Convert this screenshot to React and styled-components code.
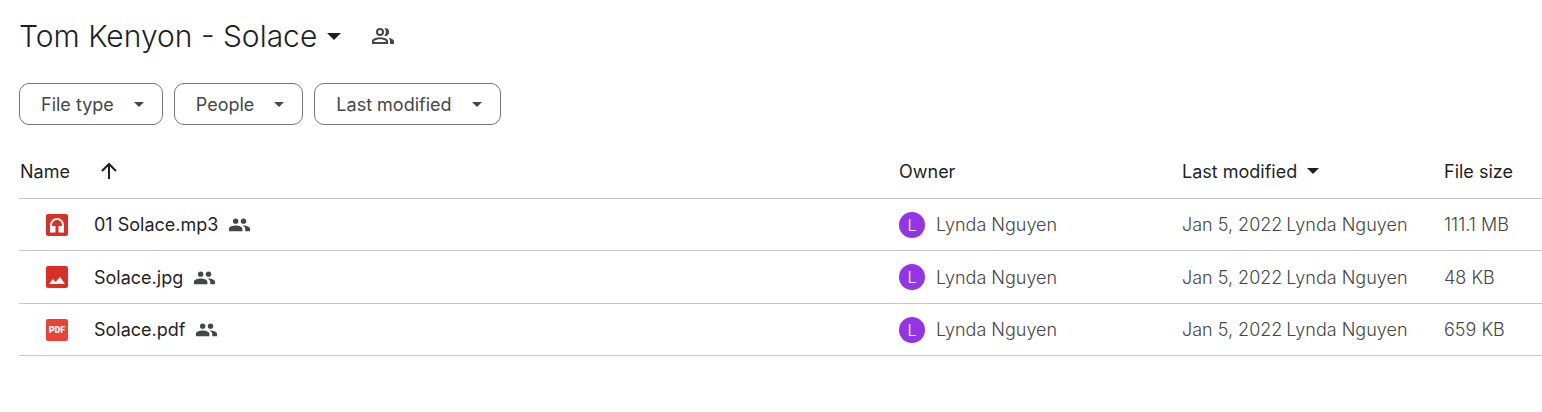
import React from 'react';
import styled, { createGlobalStyle } from 'styled-components';

const files = [
    { name: '01 Solace.mp3', type: 'audio', owner: 'Lynda Nguyen', modified: 'Jan 5, 2022', size: '111.1 MB' },
    { name: 'Solace.jpg', type: 'image', owner: 'Lynda Nguyen', modified: 'Jan 5, 2022', size: '48 KB' },
    { name: 'Solace.pdf', type: 'pdf', owner: 'Lynda Nguyen', modified: 'Jan 5, 2022', size: '659 KB' },
];

const filters = ['File type', 'People', 'Last modified'];

const Caret = ({ size }) => (
    <svg width={size * 2} height={size} viewBox="0 0 14 7" aria-hidden="true">
        <path d="M0 0h14L7 7z" fill="currentColor" />
    </svg>
);

const SharedOutline = () => (
    <svg width="24" height="24" viewBox="0 0 24 24" fill="currentColor" role="img" aria-label="Shared">
        <path fillRule="evenodd" d="M9 12a4 4 0 1 0 0-8 4 4 0 0 0 0 8zm0-2a2 2 0 1 0 0-4 2 2 0 0 0 0 4z" />
        <path fillRule="evenodd" d="M1 20v-2.800c0-.9.400-1.700 1.300-2.200C4 14 6.300 13.200 9 13.200s5 .8 6.700 1.800c.9.500 1.300 1.300 1.300 2.200V20zm2-2h12v-.8c0-.3-.1-.4-.3-.5-1.500-.9-3.400-1.500-5.700-1.500s-4.200.6-5.700 1.500c-.2.100-.3.200-.3.500z" />
        <path d="M13.300 11.900c1-1.100 1.500-2.400 1.500-3.900s-.5-2.800-1.500-3.900A4 4 0 1 1 13.300 11.900zM19 20v-3c0-1.300-.6-2.400-1.700-3.300 1.600.3 3 .8 4.200 1.500.9.500 1.500 1.200 1.500 2.100V20z" />
    </svg>
);

const Shared = () => (
    <svg width="23" height="23" viewBox="0 0 24 24" fill="currentColor" role="img" aria-label="Shared">
        <circle cx="8" cy="8.500" r="2.800" />
        <circle cx="16.200" cy="8.500" r="2.800" />
        <path d="M8 13c-2.700 0-7 1-7 3.500V19h14v-2.500c0-2.500-4.300-3.500-7-3.500zM15 13c1.800 1 3 2 3 3.600V19h5v-2.500c0-2.400-4-3.700-8-3.500z" />
    </svg>
);

const FileIcon = ({ type }) => (
    <FileSvg viewBox="0 0 22 22" $type={type} role="img" aria-label={type}>
        <rect width="22" height="22" rx="2" fill="currentColor" />
        {type === 'audio' && (
            <path d="M4 18.500V11a7 7 0 0 1 14 0v7.500h-5.500V12H16v-1a5 5 0 0 0-10 0v1h3.500v6.500z" fill="#fff" />
        )}
        {type === 'image' && <path d="M3 18l4-5 2.500 3L14 11l5 7z" fill="#fff" />}
        {type === 'pdf' && <text x="11" y="14" textAnchor="middle" fill="#fff">PDF</text>}
    </FileSvg>
);

const App = () => {
    return (
        <Page>
            <GlobalStyle />
            <Header>
                <TitleButton type="button">
                    <h1>Tom Kenyon - Solace</h1>
                    <Caret size={7} />
                </TitleButton>
                <IconButton type="button" aria-label="Manage access">
                    <SharedOutline />
                </IconButton>
            </Header>

            <Filters>
                {filters.map((label) => (
                    <FilterButton type="button" key={label}>
                        {label}
                        <Caret size={5} />
                    </FilterButton>
                ))}
            </Filters>

            <Table>
                <thead>
                    <tr>
                        <HeadCell>
                            <SortButton type="button" $gap={30}>
                                Name
                                <svg width="18" height="18" viewBox="0 0 18 18" fill="none" stroke="currentColor" strokeWidth="2" aria-hidden="true">
                                    <path d="M9 17V2M2 9l7-7 7 7" />
                                </svg>
                            </SortButton>
                        </HeadCell>
                        <HeadCell $width={283}>Owner</HeadCell>
                        <HeadCell $width={262}>
                            <SortButton type="button" $gap={10}>
                                Last modified
                                <Caret size={6} />
                            </SortButton>
                        </HeadCell>
                        <HeadCell $width={98}>File size</HeadCell>
                    </tr>
                </thead>
                <tbody>
                    {files.map((file) => (
                        <tr key={file.name}>
                            <Cell>
                                <FileName>
                                    <FileIcon type={file.type} />
                                    <span>{file.name}</span>
                                    <Shared />
                                </FileName>
                            </Cell>
                            <Cell>
                                <Owner>
                                    <Avatar>{file.owner[0]}</Avatar>
                                    {file.owner}
                                </Owner>
                            </Cell>
                            <Cell>
                                <Modified>
                                    <span>{file.modified}</span>
                                    <span>{file.owner}</span>
                                </Modified>
                            </Cell>
                            <Cell>{file.size}</Cell>
                        </tr>
                    ))}
                </tbody>
            </Table>
        </Page>
    );
};

const GlobalStyle = createGlobalStyle`
    * {
        box-sizing: border-box;
    }

    body {
        margin: 0;
        background: #fff;
        color: #1f1f1f;
        font-family: Inter, "Liberation Sans", sans-serif;
        font-size: 18px;
    }

    button {
        padding: 0;
        border: 0;
        background: none;
        color: inherit;
        font: inherit;
        cursor: pointer;
    }

    svg {
        flex: none;
    }
`;

const Page = styled.main`
    padding: 16px 0 0 19px;
`;

const Header = styled.header`
    display: flex;
    align-items: center;
    gap: 30px;
    height: 40px;
`;

const TitleButton = styled.button`
    display: flex;
    align-items: center;
    gap: 10px;

    h1 {
        margin: 0;
        font-size: 30px;
        font-weight: 300;
        line-height: 40px;
    }
`;

const IconButton = styled.button`
    display: flex;
    color: #444746;
`;

const Filters = styled.div`
    display: flex;
    gap: 11px;
    margin-top: 27px;
`;

const FilterButton = styled.button`
    && {
        display: flex;
        align-items: center;
        gap: 20px;
        height: 42px;
        padding: 0 18px 0 21px;
        border: 1px solid #747775;
        border-radius: 10px;
        color: #444746;
    }
`;

const Table = styled.table`
    width: 100%;
    margin-top: 21px;
    border-spacing: 0;
    table-layout: fixed;
`;

const HeadCell = styled.th`
    width: ${(props) => (props.$width ? `${props.$width}px` : 'auto')};
    height: 53px;
    padding: 0 0 2px;
    border-bottom: 1px solid #c7c7c7;
    font-weight: 400;
    text-align: left;

    &:first-child {
        padding-left: 1px;
    }
`;

const SortButton = styled.button`
    display: flex;
    align-items: center;
    gap: ${(props) => props.$gap}px;
`;

const Cell = styled.td`
    height: 52px;
    padding: 0;
    border-bottom: 1px solid #c7c7c7;
    color: #444746;
    font-weight: 300;
    white-space: nowrap;

    tr:nth-child(even) > & {
        height: 53px;
    }
`;

const FileName = styled.div`
    display: flex;
    align-items: center;
    gap: 10px;
    padding-left: 27px;

    span {
        color: #1f1f1f;
        font-weight: 400;
    }
`;

const FileSvg = styled.svg`
    width: 22px;
    height: 22px;
    margin-right: 16px;
    color: ${(props) => (props.$type === 'pdf' ? '#ea4335' : '#d93025')};

    text {
        font-family: Roboto, sans-serif;
        font-size: 9px;
        font-weight: 900;
    }
`;

const Owner = styled.div`
    display: flex;
    align-items: center;
    gap: 11px;
`;

const Avatar = styled.span`
    display: flex;
    align-items: center;
    justify-content: center;
    width: 26px;
    height: 26px;
    border-radius: 50%;
    background: #9334e6;
    color: #fff;
    font-size: 16px;
`;

const Modified = styled.div`
    display: flex;
    gap: 4px;
`;

export default App;
